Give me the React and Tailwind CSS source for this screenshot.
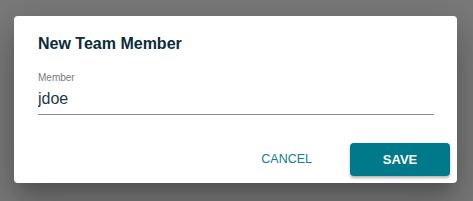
import React from 'react';

export default function App() {
	const [member, setMember] = React.useState('jdoe');

	return (
		<div className="h-[201px] w-[473px] bg-[#7a7a7a] pl-[14px] pt-[16px] font-['Liberation_Sans',Arial,sans-serif]">
			<div className="flex h-[167px] w-[443px] flex-col rounded bg-white shadow-[0_11px_15px_-7px_rgba(0,0,0,0.2),0_24px_38px_3px_rgba(0,0,0,0.14),0_9px_46px_8px_rgba(0,0,0,0.12)]">
				{/* Title */}
				<div className="px-6 pt-4">
					<h2 className="text-[16px] font-bold leading-6 text-[#0c2c3a]">New Team Member</h2>
				</div>

				{/* Field */}
				<div className="mt-[15px] pl-6 pr-[23px]">
					<label className="block text-[10px] leading-[14px] text-[#7a7a7a]">Member</label>
					<input
						value={member}
						onChange={({ target }) => setMember(target.value)}
						className="mt-[1px] block h-[29px] w-full border-b border-[#8c8c8c] bg-transparent pb-[3px] text-[16px] leading-6 text-[#1b3a48] outline-none"
					/>
				</div>

				{/* Actions */}
				<div className="mt-[28px] flex items-center justify-end gap-[22px] pr-[7px]">
					<button className="h-[33px] px-4 text-[12.5px] text-[#12808e]">CANCEL</button>
					<button className="h-[33px] w-[100px] rounded bg-[#00798a] text-[13px] font-bold text-white shadow-[0_2px_3px_rgba(0,0,0,0.3)]">
						SAVE
					</button>
				</div>
			</div>
		</div>
	);
}
